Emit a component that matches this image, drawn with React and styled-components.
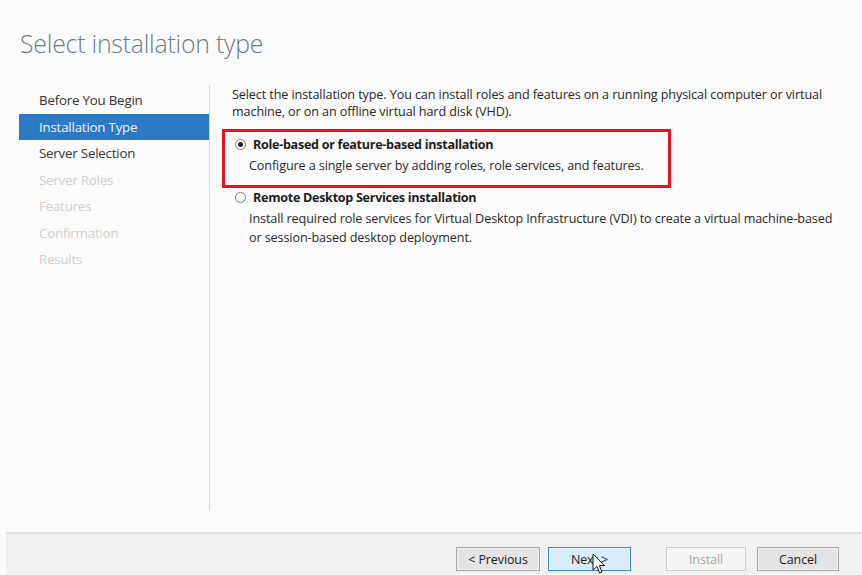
import React from 'react';
import styled, { createGlobalStyle } from 'styled-components';

const GlobalStyle = createGlobalStyle`
  html, body {
    margin: 0;
    padding: 0;
    background: #fbfbfb;
  }

  body {
    font-family: 'Open Sans', 'Noto Sans', sans-serif;
  }
`;

const Wizard = styled.div`
  position: relative;
  display: flex;
  flex-direction: column;
  width: 862px;
  height: 575px;
  overflow: hidden;
  background: #fbfbfb;
`;

const Header = styled.header`
  height: 85px;
  padding-left: 20px;
  box-sizing: border-box;
`;

const Title = styled.h1`
  margin: 0;
  padding-top: 26px;
  font-size: 24.8px;
  font-weight: 300;
  color: #6b7c85;
  letter-spacing: -0.2px;
`;

const Body = styled.div`
  display: flex;
  height: 426px;
`;

const Steps = styled.nav`
  display: flex;
  flex-direction: column;
  margin-left: 19px;
  padding-top: 2px;
  width: 190px;
  border-right: 1px solid #d4d4d4;
`;

const Step = styled.div`
  height: 26.5px;
  line-height: 27px;
  padding-left: 20px;
  font-size: 13.3px;
  letter-spacing: -0.2px;
  color: ${(p) => (p.$active ? '#eaf3fc' : p.$disabled ? '#cfcfcf' : '#333333')};
  background: ${(p) => (p.$active ? '#2c7ac3' : 'transparent')};
`;

const Content = styled.section`
  flex: 1;
  padding: 1px 0 0 22px;
  font-size: 12.6px;
  color: #262626;
`;

const Intro = styled.p`
  margin: 0;
  width: 605px;
  line-height: 17px;
  letter-spacing: -0.1px;
`;

const Option = styled.div`
  display: flex;
  flex-direction: column;
  width: fit-content;
  margin: ${(p) => (p.$marked ? '9px 0 0 -10px' : '-1px 0 0 0')};
  padding: ${(p) => (p.$marked ? '2px 24px 10px 10px' : '0 0 0 3px')};
  border: ${(p) => (p.$marked ? '3px solid #e3141b' : 'none')};
`;

const OptionLabel = styled.label`
  display: flex;
  align-items: center;
  gap: 7px;
  height: 20px;
  margin-bottom: 2px;
  font-weight: 700;
  letter-spacing: -0.3px;
  color: #1c1c1c;
`;

const Radio = styled.span`
  position: relative;
  box-sizing: border-box;
  width: 11px;
  height: 11px;
  border-radius: 50%;
  border: 1px solid #7a7a7a;
  background: #fff;

  &::after {
    content: '';
    display: ${(p) => (p.$checked ? 'block' : 'none')};
    position: absolute;
    left: 2px;
    top: 2px;
    width: 5px;
    height: 5px;
    border-radius: 50%;
    background: #222;
  }
`;

const OptionText = styled.p`
  margin: 0;
  padding-left: 14px;
  width: ${(p) => (p.$fit ? 'auto' : '592px')};
  line-height: 19px;
  letter-spacing: -0.1px;
  color: #2a2a2a;
`;

const Footer = styled.footer`
  display: flex;
  justify-content: flex-end;
  align-items: flex-start;
  margin-top: 21px;
  margin-left: 6px;
  padding: 13px 23px 0 0;
  height: 42px;
  box-sizing: border-box;
  background: #f0f0f0;
  border-top: 2px solid #e2e2e2;
`;

const Button = styled.button`
  width: ${(p) => p.$w}px;
  height: 24px;
  margin-left: ${(p) => p.$gap}px;
  padding: 0;
  font-family: 'Open Sans', 'Noto Sans', sans-serif;
  font-size: 12.5px;
  letter-spacing: -0.1px;
  color: ${(p) => (p.disabled ? '#a6a6a6' : '#1e1e1e')};
  background: ${(p) => (p.$focused ? '#d8ecfa' : p.disabled ? '#f4f4f4' : '#e4e4e4')};
  border: 1px solid ${(p) => (p.$focused ? '#3d8cc7' : p.disabled ? '#cdcdcd' : '#a9a9a9')};
  box-shadow: inset 0 0 0 1px ${(p) => (p.$focused ? '#e9f5fd' : p.disabled ? '#f9f9f9' : '#efefef')};
`;

const Pointer = styled.svg`
  position: absolute;
  left: 592px;
  top: 553px;
`;

const steps = [
  { name: 'Before You Begin' },
  { name: 'Installation Type', active: true },
  { name: 'Server Selection' },
  { name: 'Server Roles', disabled: true },
  { name: 'Features', disabled: true },
  { name: 'Confirmation', disabled: true },
  { name: 'Results', disabled: true },
];

export default function App() {
  return (
    <>
      <GlobalStyle />
      <Wizard>
        <Header>
          <Title>Select installation type</Title>
        </Header>

        <Body>
          <Steps>
            {steps.map((s) => (
              <Step key={s.name} $active={s.active} $disabled={s.disabled}>
                {s.name}
              </Step>
            ))}
          </Steps>

          <Content>
            <Intro>
              Select the installation type. You can install roles and features on a running physical computer or virtual
              machine, or on an offline virtual hard disk (VHD).
            </Intro>

            <Option $marked>
              <OptionLabel>
                <Radio $checked />
                Role-based or feature-based installation
              </OptionLabel>
              <OptionText $fit>Configure a single server by adding roles, role services, and features.</OptionText>
            </Option>

            <Option>
              <OptionLabel>
                <Radio />
                Remote Desktop Services installation
              </OptionLabel>
              <OptionText>
                Install required role services for Virtual Desktop Infrastructure (VDI) to create a virtual machine-based
                or session-based desktop deployment.
              </OptionText>
            </Option>
          </Content>
        </Body>

        <Footer>
          <Button $w={84} $gap={0}>&lt; Previous</Button>
          <Button $w={83} $gap={8} $focused>Next &gt;</Button>
          <Button $w={80} $gap={35} disabled>Install</Button>
          <Button $w={82} $gap={11}>Cancel</Button>
        </Footer>

        <Pointer width="14" height="22" viewBox="0 0 14 22">
          <path d="M1 1 L1 17 L5 13.5 L7.6 20 L10 19 L7.4 12.6 L12.5 12.6 Z" fill="#fff" stroke="#111" strokeWidth="1" strokeLinejoin="round" />
        </Pointer>
      </Wizard>
    </>
  );
}
